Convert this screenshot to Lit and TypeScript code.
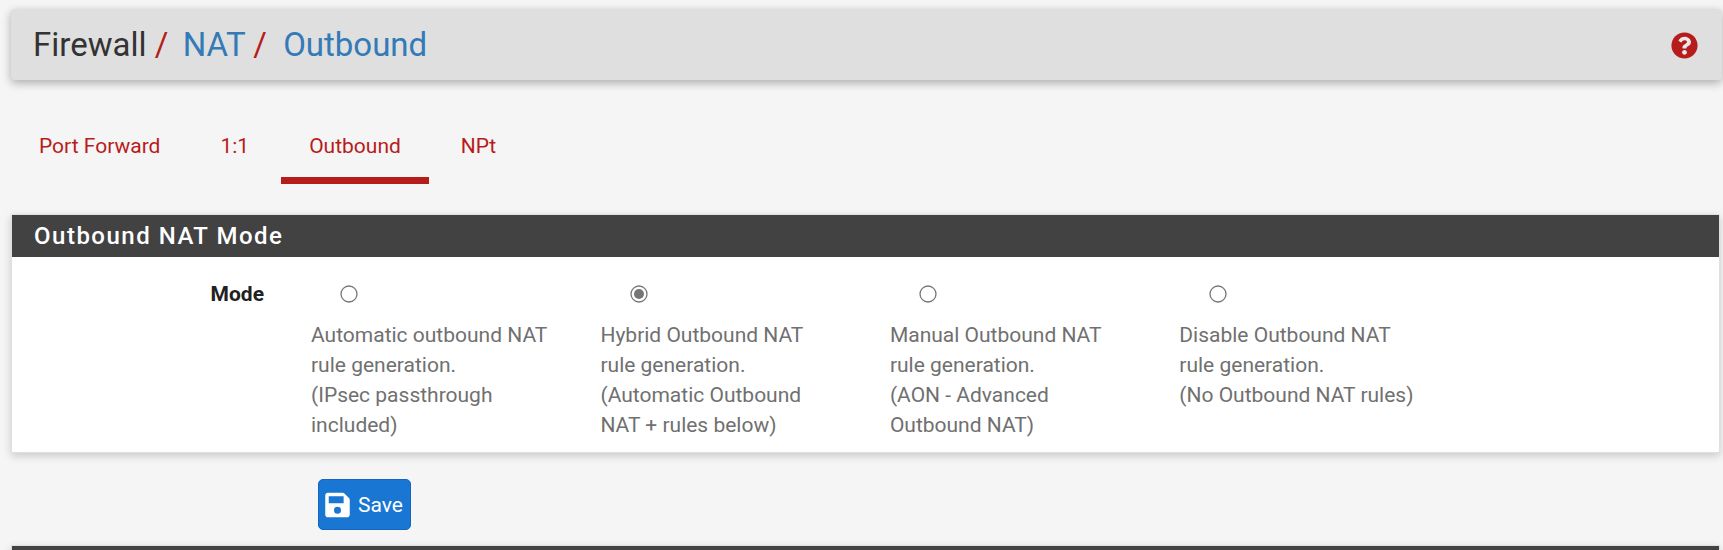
import { LitElement, html, svg, css } from "lit";
import { customElement } from "lit/decorators.js";

const modes = [
  { lines: ["Automatic outbound NAT", "rule generation.", "(IPsec passthrough", "included)"], checked: false },
  { lines: ["Hybrid Outbound NAT", "rule generation.", "(Automatic Outbound", "NAT + rules below)"], checked: true },
  { lines: ["Manual Outbound NAT", "rule generation.", "(AON - Advanced", "Outbound NAT)"], checked: false },
  { lines: ["Disable Outbound NAT", "rule generation.", "(No Outbound NAT rules)"], checked: false },
];

@customElement("app-root")
export class AppRoot extends LitElement {
  static styles = css`
    :host {
      display: block;
      height: 550px;
      overflow: hidden;
      background: #f5f5f5;
      font-family: Roboto, "Liberation Sans", sans-serif;
      color: #212121;
      padding: 9px 1px 0 11px;
      box-sizing: border-box;
    }
    .crumbs {
      height: 71px;
      background: #dfdfdf;
      border-radius: 4px;
      box-shadow: 0 3px 10px rgba(0, 0, 0, 0.3);
      display: flex;
      align-items: center;
      justify-content: space-between;
      padding: 0 24px 0 22px;
    }
    .trail { margin: 0; font-size: 33px; font-weight: 400; line-height: 40px; white-space: pre; color: #333; }
    .trail a { color: #337ab7; }
    .trail i { color: #b71c1c; font-style: normal; }
    .trail i.tight { margin-right: -2px; }
    .help { width: 27px; height: 27px; display: block; margin-top: 2px; }
    .tabs { display: flex; gap: 4px; margin-top: 31px; height: 73px; }
    .tab {
      padding: 23px 28px 0;
      color: #b71c1c;
      font-size: 21px;
      line-height: 24px;
      box-sizing: border-box;
      height: 73px;
    }
    .tab.active { border-bottom: 7px solid #b71c1c; }
    .panel {
      margin: 30px 2px 0 0;
      background: #fff;
      border: 1px solid #e0e0e0;
      box-shadow: 0 3px 8px rgba(0, 0, 0, 0.18);
    }
    .panel-title {
      margin: 0;
      height: 42px;
      line-height: 42px;
      background: #424242;
      color: #fff;
      font-size: 24px;
      font-weight: 500;
      letter-spacing: 1.5px;
      padding-left: 22px;
    }
    .row { display: flex; height: 195px; padding-top: 22px; box-sizing: border-box; }
    .label { width: 252px; text-align: right; font-size: 21px; font-weight: 700; line-height: 30px; flex: none; }
    .modes { display: flex; margin-left: 47px; }
    .mode { width: 289.45px; flex: none; font-size: 21px; line-height: 30px; color: #707070; }
    .mode-radio { height: 30px; margin-bottom: 11px; padding-left: 29.2px; display: flex; align-items: center; }
    .radio { width: 18px; height: 18px; display: block; }
    .line { display: block; white-space: nowrap; }
    .actions { padding: 26px 0 0 307px; }
    .save {
      height: 51px;
      width: 93px;
      box-sizing: border-box;
      background: #1976d2;
      border: 1px solid #1565c0;
      border-radius: 5px;
      color: #fff;
      font: 400 21px Roboto, sans-serif;
      display: flex;
      align-items: center;
      gap: 8px;
      padding: 0 6px;
      white-space: nowrap;
    }
    .save svg { width: 25px; height: 28px; flex: none; }
    .next { margin-top: 15px; }
  `;

  private radio(checked: boolean) {
    return html`<svg class="radio" viewBox="0 0 18 18">
      <circle cx="9" cy="9" r="8" fill="#fff" stroke="#767676" stroke-width="1.3"></circle>
      ${checked ? svg`<circle cx="9" cy="9" r="5" fill="#767676"></circle>` : ""}
    </svg>`;
  }

  render() {
    return html`
      <header class="crumbs">
        <h1 class="trail">Firewall <i class="tight">/</i>  <a>NAT</a> <i>/</i>  <a>Outbound</a></h1>
        <svg class="help" viewBox="0 0 512 512" aria-label="Help">
          <path fill="#b71c1c" d="M504 256c0 137-111 248-248 248S8 393 8 256 119 8 256 8s248 111 248 248z"></path>
          <path fill="#e8e8e8" d="M262.700 90c-54.500 0-89.300 23-116.600 63.800-3.500 5.300-2.400 12.400 2.700 16.200l34.700 26.300c5.200 3.900 12.600 3 16.700-2.100 17.900-22.700 30.200-35.800 57.300-35.800 20.400 0 45.700 13.100 45.700 32.900 0 15-12.400 22.700-32.600 34-23.600 13.200-54.800 29.700-54.800 70.900V300c0 6.600 5.400 12 12 12h56c6.600 0 12-5.400 12-12v-1.300c0-28.600 83.500-29.800 83.500-107.100C378.400 133.300 318 90 262.700 90zM256 339c-25.400 0-46 20.600-46 46s20.600 46 46 46 46-20.600 46-46-20.600-46-46-46z"></path>
        </svg>
      </header>
      <nav class="tabs">
        <a class="tab">Port Forward</a>
        <a class="tab">1:1</a>
        <a class="tab active">Outbound</a>
        <a class="tab">NPt</a>
      </nav>
      <section class="panel">
        <h2 class="panel-title">Outbound NAT Mode</h2>
        <div class="row">
          <div class="label">Mode</div>
          <div class="modes">
            ${modes.map(
              (m) => html`<label class="mode">
                <span class="mode-radio">${this.radio(m.checked)}</span>
                ${m.lines.map((l) => html`<span class="line">${l}</span>`)}
              </label>`
            )}
          </div>
        </div>
      </section>
      <div class="actions">
        <button class="save">
          <svg viewBox="0 0 448 512">
            <path fill="#fff" fill-rule="evenodd" d="M48 32H316c13 0 25 5 34 14l84 84c9 9 14 21 14 34V432c0 27-21 48-48 48H48c-27 0-48-21-48-48V80c0-27 21-48 48-48zM64 96V224H336V96zM224 288a64 64 0 1 0 0 128 64 64 0 1 0 0-128z"></path>
          </svg>
          Save
        </button>
      </div>
      <section class="panel next"><div class="panel-title"></div></section>
    `;
  }
}
